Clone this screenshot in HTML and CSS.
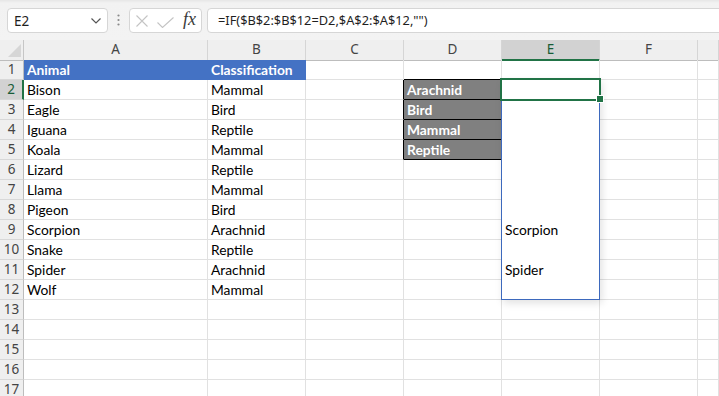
FILE: index.html
```html
<!DOCTYPE html>
<html lang="en">

<head>
    <meta charset="UTF-8">
    <meta name="viewport" content="width=device-width, initial-scale=1.0">
    <title>Animals - Filter</title>
    <link rel="stylesheet" href="styles.css">
</head>

<body>
    <!-- Formula bar -->
    <div class="formula-bar">
        <div class="name-box">
            <span>E2</span>
            <svg class="chevron" width="10" height="6" viewBox="0 0 10 6">
                <path d="M0.5 0.5 L5 5 L9.5 0.5" fill="none" stroke="#555" stroke-width="1.2"/>
            </svg>
        </div>
        <div class="grip">
            <svg width="3" height="12" viewBox="0 0 3 12">
                <circle cx="1.5" cy="1.5" r="1.1" fill="#8a8a8a"/>
                <circle cx="1.5" cy="6" r="1.1" fill="#8a8a8a"/>
                <circle cx="1.5" cy="10.5" r="1.1" fill="#8a8a8a"/>
            </svg>
        </div>
        <div class="fx-box">
            <svg class="icon-cancel" width="12" height="12" viewBox="0 0 12 12">
                <path d="M0.5 0.5 L11.5 11.5 M11.5 0.5 L0.5 11.5" stroke="#c4c4c4" stroke-width="1.1"/>
            </svg>
            <svg class="icon-enter" width="17" height="11" viewBox="0 0 17 11">
                <path d="M0.5 5.5 L5.5 10.5 L16.5 0.5" fill="none" stroke="#c4c4c4" stroke-width="1.1"/>
            </svg>
            <span class="fx">fx</span>
        </div>
        <div class="formula-input">=IF($B$2:$B$12=D2,$A$2:$A$12,"")</div>
    </div>

    <!-- Sheet grid -->
    <div class="sheet">
        <div class="row">
            <div class="corner"><span class="corner-tri"></span></div>
            <div class="col-head">A</div>
            <div class="col-head">B</div>
            <div class="col-head">C</div>
            <div class="col-head">D</div>
            <div class="col-head active">E</div>
            <div class="col-head">F</div>
            <div class="col-head"></div>
        </div>
        <div class="row">
            <div class="row-head">1</div>
            <div class="cell title-fill">Animal</div>
            <div class="cell title-fill">Classification</div>
            <div class="cell"></div>
            <div class="cell box-above"></div>
            <div class="cell"></div>
            <div class="cell"></div>
            <div class="cell"></div>
        </div>
        <div class="row">
            <div class="row-head active">2</div>
            <div class="cell">Bison</div>
            <div class="cell">Mammal</div>
            <div class="cell box-left"></div>
            <div class="cell label-fill">Arachnid</div>
            <div class="cell spill"></div>
            <div class="cell"></div>
            <div class="cell"></div>
        </div>
        <div class="row">
            <div class="row-head">3</div>
            <div class="cell">Eagle</div>
            <div class="cell">Bird</div>
            <div class="cell box-left"></div>
            <div class="cell label-fill">Bird</div>
            <div class="cell spill"></div>
            <div class="cell"></div>
            <div class="cell"></div>
        </div>
        <div class="row">
            <div class="row-head">4</div>
            <div class="cell">Iguana</div>
            <div class="cell">Reptile</div>
            <div class="cell box-left"></div>
            <div class="cell label-fill">Mammal</div>
            <div class="cell spill"></div>
            <div class="cell"></div>
            <div class="cell"></div>
        </div>
        <div class="row">
            <div class="row-head">5</div>
            <div class="cell">Koala</div>
            <div class="cell">Mammal</div>
            <div class="cell box-left"></div>
            <div class="cell label-fill">Reptile</div>
            <div class="cell spill"></div>
            <div class="cell"></div>
            <div class="cell"></div>
        </div>
        <div class="row">
            <div class="row-head">6</div>
            <div class="cell">Lizard</div>
            <div class="cell">Reptile</div>
            <div class="cell"></div>
            <div class="cell"></div>
            <div class="cell spill"></div>
            <div class="cell"></div>
            <div class="cell"></div>
        </div>
        <div class="row">
            <div class="row-head">7</div>
            <div class="cell">Llama</div>
            <div class="cell">Mammal</div>
            <div class="cell"></div>
            <div class="cell"></div>
            <div class="cell spill"></div>
            <div class="cell"></div>
            <div class="cell"></div>
        </div>
        <div class="row">
            <div class="row-head">8</div>
            <div class="cell">Pigeon</div>
            <div class="cell">Bird</div>
            <div class="cell"></div>
            <div class="cell"></div>
            <div class="cell spill"></div>
            <div class="cell"></div>
            <div class="cell"></div>
        </div>
        <div class="row">
            <div class="row-head">9</div>
            <div class="cell">Scorpion</div>
            <div class="cell">Arachnid</div>
            <div class="cell"></div>
            <div class="cell"></div>
            <div class="cell spill">Scorpion</div>
            <div class="cell"></div>
            <div class="cell"></div>
        </div>
        <div class="row">
            <div class="row-head">10</div>
            <div class="cell">Snake</div>
            <div class="cell">Reptile</div>
            <div class="cell"></div>
            <div class="cell"></div>
            <div class="cell spill"></div>
            <div class="cell"></div>
            <div class="cell"></div>
        </div>
        <div class="row">
            <div class="row-head">11</div>
            <div class="cell">Spider</div>
            <div class="cell">Arachnid</div>
            <div class="cell"></div>
            <div class="cell"></div>
            <div class="cell spill">Spider</div>
            <div class="cell"></div>
            <div class="cell"></div>
        </div>
        <div class="row">
            <div class="row-head">12</div>
            <div class="cell">Wolf</div>
            <div class="cell">Mammal</div>
            <div class="cell"></div>
            <div class="cell"></div>
            <div class="cell"></div>
            <div class="cell"></div>
            <div class="cell"></div>
        </div>
        <div class="row">
            <div class="row-head">13</div>
            <div class="cell"></div><div class="cell"></div><div class="cell"></div><div class="cell"></div>
            <div class="cell"></div><div class="cell"></div><div class="cell"></div>
        </div>
        <div class="row">
            <div class="row-head">14</div>
            <div class="cell"></div><div class="cell"></div><div class="cell"></div><div class="cell"></div>
            <div class="cell"></div><div class="cell"></div><div class="cell"></div>
        </div>
        <div class="row">
            <div class="row-head">15</div>
            <div class="cell"></div><div class="cell"></div><div class="cell"></div><div class="cell"></div>
            <div class="cell"></div><div class="cell"></div><div class="cell"></div>
        </div>
        <div class="row">
            <div class="row-head">16</div>
            <div class="cell"></div><div class="cell"></div><div class="cell"></div><div class="cell"></div>
            <div class="cell"></div><div class="cell"></div><div class="cell"></div>
        </div>
        <div class="row">
            <div class="row-head">17</div>
            <div class="cell"></div><div class="cell"></div><div class="cell"></div><div class="cell"></div>
            <div class="cell"></div><div class="cell"></div><div class="cell"></div>
        </div>

        <!-- Spill range and active cell drawn over the grid -->
        <div class="spill-range"></div>
        <div class="active-cell"></div>
        <div class="fill-handle"></div>
    </div>
</body>

</html>
```

FILE: styles.css
```css
* {
    box-sizing: border-box;
}

body {
    margin: 0;
    padding: 0;
    background-color: #ffffff;
    font-family: "Noto Sans", Arial, sans-serif;
    overflow: hidden;
}

/* Formula bar */
.formula-bar {
    display: flex;
    align-items: flex-start;
    height: 40px;
    padding: 8px 0 0 7px;
    background: linear-gradient(#e6e6e6 0, #f2f2f2 3px, #f3f3f3 100%);
}

.name-box,
.fx-box,
.formula-input {
    height: 25px;
    background-color: #ffffff;
    border: 1px solid #d6d6d6;
    border-radius: 4px;
}

.name-box {
    display: flex;
    align-items: center;
    justify-content: space-between;
    width: 101px;
    padding: 0 6px 0 6px;
    font-size: 13.5px;
    color: #1f1f1f;
}

.chevron {
    margin-top: 1px;
}

.grip {
    display: flex;
    justify-content: center;
    width: 21px;
    padding-top: 6px;
}

.fx-box {
    display: flex;
    align-items: center;
    width: 73px;
    padding-left: 6px;
}

.icon-cancel {
    margin-right: 9px;
}

.icon-enter {
    margin-top: 3px;
    margin-right: 9px;
}

.fx {
    font-family: "Liberation Serif", "Times New Roman", serif;
    font-style: italic;
    font-size: 18px;
    color: #3a3a3a;
    margin-top: -2px;
}

.formula-input {
    flex: 1;
    margin-left: 5px;
    margin-right: -8px;
    padding: 0 0 0 10px;
    font-size: 12.8px;
    line-height: 22px;
    color: #1f1f1f;
}

/* Sheet */
.sheet {
    position: relative;
}

.row {
    display: grid;
    grid-template-columns: 24px 184px 98px 98px 98px 98px 98px 1fr;
    height: 20px;
}

.corner,
.col-head,
.row-head {
    background-color: #efefef;
    color: #444444;
    font-size: 13.5px;
    line-height: 19px;
    text-align: center;
}

.corner {
    position: relative;
    border-right: 1px solid #c6c6c6;
    border-bottom: 1px solid #bdbdbd;
}

.corner-tri {
    position: absolute;
    right: 2px;
    bottom: 3px;
    width: 0;
    height: 0;
    border-left: 13px solid transparent;
    border-bottom: 13px solid #d6d6d6;
}

.col-head {
    border-right: 1px solid #d5d5d5;
    border-bottom: 1px solid #bdbdbd;
}

.col-head.active {
    background-color: #d2d2d2;
    color: #185c37;
    border-bottom: 2px solid #217346;
}

.row-head {
    border-right: 1px solid #bdbdbd;
    border-bottom: 1px solid #d8d8d8;
}

.row-head.active {
    background-color: #d2d2d2;
    color: #185c37;
    border-right: 2px solid #217346;
}

.cell {
    padding-left: 3px;
    font-family: Lato, "Open Sans", sans-serif;
    font-size: 13.8px;
    line-height: 20px;
    color: #000000;
    white-space: nowrap;
    overflow: hidden;
    border-right: 1px solid #e1e1e1;
    border-bottom: 1px solid #e1e1e1;
}

.title-fill {
    background-color: #4472c4;
    color: #ffffff;
    font-weight: bold;
    border-color: #4472c4;
}

.label-fill {
    background-color: #808080;
    color: #ffffff;
    font-weight: bold;
    border-right-color: #000000;
    border-bottom-color: #000000;
}

.box-above {
    border-bottom-color: #000000;
}

.box-left {
    border-right-color: #000000;
}

.spill {
    border-bottom-color: #ffffff;
}

/* Overlays */
.spill-range {
    position: absolute;
    left: 501px;
    top: 39px;
    width: 99px;
    height: 221px;
    border: 1px solid #3d69bd;
    box-shadow: 2px 3px 8px rgba(0, 0, 0, 0.12);
}

.active-cell {
    position: absolute;
    left: 500px;
    top: 38px;
    width: 101px;
    height: 23px;
    border: 2px solid #217346;
}

.fill-handle {
    position: absolute;
    left: 597px;
    top: 56px;
    width: 6px;
    height: 6px;
    background-color: #217346;
    outline: 1px solid #ffffff;
}
```
